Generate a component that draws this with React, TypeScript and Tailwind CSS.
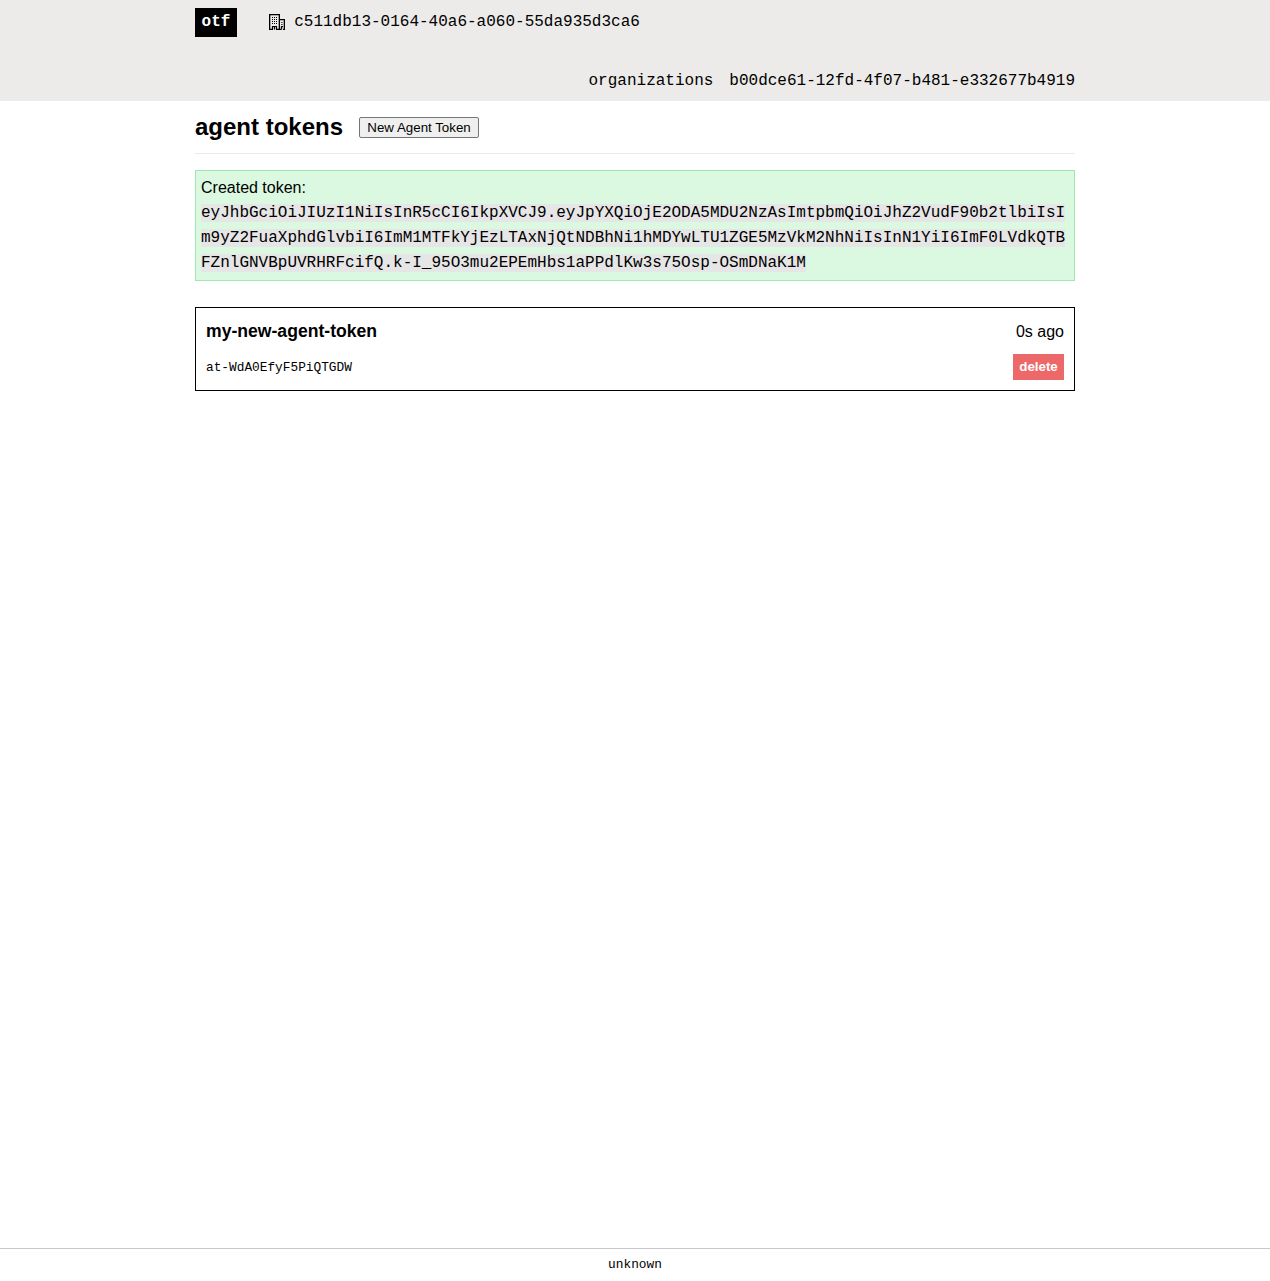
import React from "react";

function BuildingIcon() {
  return (
    <svg className="-mt-0.5" width="16" height="16" viewBox="0 0 16 16" fill="none" stroke="black">
      <path strokeWidth="1.3" d="M0.65 15.35V0.65H10.35V15.35M10.35 5.65H15.35V15.35M0 15.35H4M7 15.35H12.5M14 15.35H16" />
      <path strokeWidth="1.2" d="M3.5 15.5V12.5H7.5V15.5M5.5 12.5V15.5M12.5 15.5V12.6H14" />
      <path d="M3 3.5H8M3 5.5H8M3 7.5H8M3 9.5H8" strokeDasharray="1 1" />
      <path d="M12.3 8.5H13.5M12.3 10.5H13.5" />
    </svg>
  );
}

export default function App() {
  return (
    <div className="flex min-h-screen flex-col bg-white font-['Liberation_Sans',sans-serif] text-base text-black">
      <header className="h-[101px] bg-[#ecebe9] font-['Liberation_Mono',monospace] leading-[18px]">
        <div className="mx-auto flex h-full w-[880px] flex-col justify-between pt-2 pb-[11px]">
          <div className="flex h-[29px] items-center">
            <a className="flex h-[29px] w-[42px] justify-center bg-black pt-[5px] font-bold text-white">otf</a>
            <div className="ml-8 flex items-center gap-[9.2px]">
              <BuildingIcon />
              <a className="-mt-0.5">c511db13-0164-40a6-a060-55da935d3ca6</a>
            </div>
          </div>
          <nav className="flex justify-end gap-4">
            <a>organizations</a>
            <a>b00dce61-12fd-4f07-b481-e332677b4919</a>
          </nav>
        </div>
      </header>
      <main className="mx-auto w-[880px] flex-1">
        <div className="flex h-[53px] items-center gap-4 border-b border-[#ebebeb]">
          <h1 className="pb-0.5 text-2xl leading-[27px] font-bold">agent tokens</h1>
          <button className="h-[21px] w-[120px] rounded-[2px] border border-[#767676] bg-[#efefef] text-[13.3333px] leading-[15px]">New Agent Token</button>
        </div>
        <div className="mt-4 h-[111px] border border-[#9fe6b0] bg-[#dbf9e1] p-[5px] pt-1 leading-[25px]">
          <div>Created token:</div>
          <div className="pt-px font-['Liberation_Mono',monospace] break-all">
            <span className="bg-[#e6e6e6]">eyJhbGciOiJIUzI1NiIsInR5cCI6IkpXVCJ9.eyJpYXQiOjE2ODA5MDU2NzAsImtpbmQiOiJhZ2VudF90b2tlbiIsIm9yZ2FuaXphdGlvbiI6ImM1MTFkYjEzLTAxNjQtNDBhNi1hMDYwLTU1ZGE5MzVkM2NhNiIsInN1YiI6ImF0LVdkQTBFZnlGNVBpUVRHRFcifQ.k-I_95O3mu2EPEmHbs1aPPdlKw3s75Osp-OSmDNaK1M</span>
          </div>
        </div>
        <div className="mt-[26px] flex h-[84px] flex-col justify-between border border-black p-2.5">
          <div className="flex h-[26px] items-center justify-between">
            <span className="text-[17.6px] font-bold">my-new-agent-token</span>
            <span className="pt-0.5">0s ago</span>
          </div>
          <div className="flex h-[26px] items-center justify-between">
            <span className="pt-0.5 font-['Liberation_Mono',monospace] text-[12.8px]">at-WdA0EfyF5PiQTGDW</span>
            <button className="h-[26px] w-[51px] bg-[#ed6868] text-[13.3333px] font-bold text-white">delete</button>
          </div>
        </div>
      </main>
      <footer className="flex h-[33px] items-center justify-center border-t border-[#c8c8c8] font-['Liberation_Mono',monospace] text-[12.8px]">unknown</footer>
    </div>
  );
}
